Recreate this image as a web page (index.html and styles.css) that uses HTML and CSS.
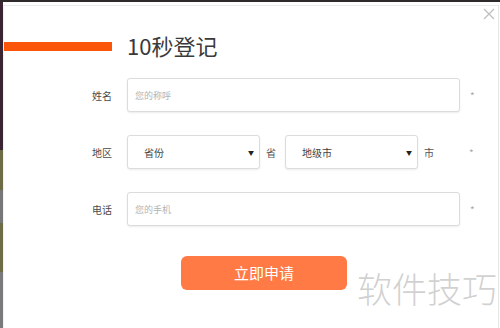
FILE: index.html
```html
<!DOCTYPE html>
<html>
<head>
	<meta name="viewport" content="width=device-width, initial-scale=1.0">
	<link rel="stylesheet" href="styles.css">
	<title>10秒登记</title>
</head>
<body>
	<div class="topline"></div>
	<div class="page">
		<div class="strip"></div>
		<div class="dialog">
			<svg class="close" width="12" height="12" viewBox="0 0 12 12">
				<path d="M1 1 L11 11 M11 1 L1 11" stroke="#bdbdbd" stroke-width="1.2" fill="none"/>
			</svg>
			<div class="head">
				<div class="bar"></div>
				<h1 class="title">10秒登记</h1>
			</div>
			<div class="form">
				<div class="row">
					<span class="label">姓名</span>
					<div class="field wide"><span class="ph">您的称呼</span></div>
					<span class="star">*</span>
				</div>
				<div class="row">
					<span class="label">地区</span>
					<div class="field sel"><span class="val">省份</span><span class="arrow">▼</span></div>
					<span class="unit first">省</span>
					<div class="field sel"><span class="val">地级市</span><span class="arrow">▼</span></div>
					<span class="unit">市</span>
					<span class="star far">*</span>
				</div>
				<div class="row">
					<span class="label">电话</span>
					<div class="field wide"><span class="ph">您的手机</span></div>
					<span class="star">*</span>
				</div>
				<div class="submit">立即申请</div>
			</div>
			<div class="mark">软件技巧</div>
		</div>
	</div>
</body>
</html>
```
FILE: styles.css
```css
body {
	margin: 0;
	width: 500px;
	height: 328px;
	overflow: hidden;
	background: #fff;
	font-family: "Noto Sans CJK SC", "Noto Sans", sans-serif;
	color: #444;
}

.topline {
	height: 2px;
	background: #2e2a2c;
}

.page {
	display: flex;
	height: 326px;
}

.strip {
	width: 3px;
	flex: none;
	background: linear-gradient(to bottom,
		#3b2433 0, #3b2433 148px,
		#6e6c45 148px, #6e6c45 188px,
		#77777a 188px, #77777a 221px,
		#6e6c45 221px, #6e6c45 270px,
		#7a7a7c 270px);
}

.dialog {
	position: relative;
	width: 494px;
	margin-top: 3px;
	border-top: 1px solid #ececec;
	border-right: 1px solid #e6e6e6;
	border-left: 1px solid #f2f2f2;
}

.close {
	position: absolute;
	top: 2px;
	right: 3px;
}

.head {
	display: flex;
	align-items: center;
	margin-top: 24px;
	height: 30px;
}

.bar {
	width: 108px;
	height: 9px;
	margin-top: 3px;
	background: #fa5509;
}

.title {
	margin: 0 0 0 15px;
	font-size: 22px;
	font-weight: normal;
	line-height: 30px;
	color: #3a3a3a;
}

.form {
	margin-top: 18px;
	display: flex;
	flex-direction: column;
	gap: 23px;
}

.row {
	display: flex;
	align-items: center;
	height: 34px;
}

.label {
	width: 108px;
	text-align: right;
	font-size: 10px;
	margin-right: 15px;
	color: #4a4a4a;
}

.field {
	box-sizing: border-box;
	height: 34px;
	border: 1px solid #dcdcdc;
	border-radius: 3px;
	box-shadow: 0 1px 2px rgba(0, 0, 0, 0.08);
	display: flex;
	align-items: center;
	background: #fff;
}

.wide {
	width: 333px;
	padding-left: 7px;
}

.ph {
	font-size: 9px;
	color: #b3b3b3;
}

.sel {
	width: 133px;
	padding: 0 5px 0 16px;
	justify-content: space-between;
}

.val {
	font-size: 10px;
	color: #444;
}

.arrow {
	font-size: 6px;
	color: #222;
}

.unit {
	font-size: 10px;
	color: #555;
	margin: 0 10px 0 6px;
}

.unit.first {
	margin-right: 9px;
}

.star {
	font-size: 10px;
	color: #aaa;
	margin-left: 10px;
}

.star.far {
	margin-left: 25px;
}

.submit {
	margin: 7px 0 0 177px;
	width: 166px;
	height: 34px;
	line-height: 34px;
	border-radius: 6px;
	background: #ff7a45;
	color: #fff;
	font-size: 15px;
	text-align: center;
}

.mark {
	position: absolute;
	left: 353px;
	top: 256px;
	font-size: 35px;
	font-weight: 300;
	color: rgba(170, 170, 170, 0.55);
	white-space: nowrap;
}
```
